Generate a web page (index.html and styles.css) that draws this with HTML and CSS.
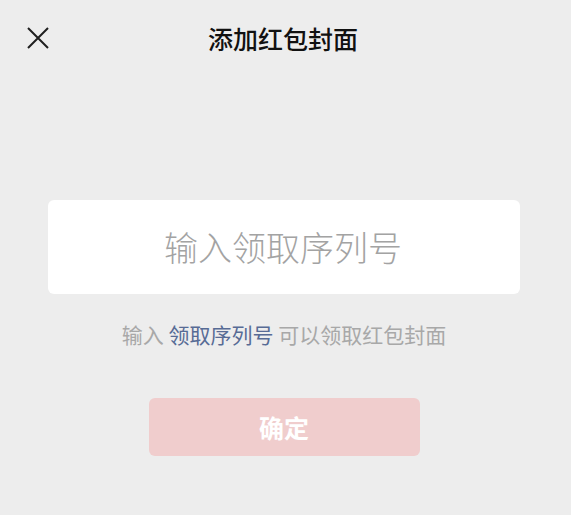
FILE: index.html
```
<!DOCTYPE html>
<html lang="zh">
<head>
<meta charset="utf-8">
<link rel="stylesheet" href="styles.css">
</head>
<body>
<div class="page">
  <header class="topbar">
    <button class="close" aria-label="关闭">
      <svg width="24" height="24" viewBox="0 0 24 24"><path d="M2 2 L22 22 M22 2 L2 22" stroke="#1f1f1f" stroke-width="2" fill="none"/></svg>
    </button>
    <h1 class="title">添加红包封面</h1>
    <span class="spacer"></span>
  </header>
  <main class="content">
    <div class="card">
      <span class="placeholder">输入领取序列号</span>
    </div>
    <p class="hint">输入 <span class="link">领取序列号</span> 可以领取红包封面</p>
    <button class="confirm">确定</button>
  </main>
</div>
</body>
</html>
```
FILE: styles.css
```
* { box-sizing: border-box; }
html, body { margin: 0; padding: 0; }
body {
  background: #ededed;
  font-family: "Noto Sans CJK SC", "Noto Sans", sans-serif;
  width: 571px;
  height: 515px;
  overflow: hidden;
}
.topbar {
  height: 76px;
  display: grid;
  grid-template-columns: 80px 1fr 80px;
  align-items: center;
}
.close {
  border: 0;
  background: none;
  padding: 0;
  margin-left: 26px;
  width: 24px;
  height: 24px;
  display: flex;
}
.title {
  margin: 0;
  padding-right: 5px;
  text-align: center;
  font-size: 25px;
  font-weight: 500;
  color: #111;
  line-height: 1;
}
.content {
  padding: 0 51px 0 48px;
  display: flex;
  flex-direction: column;
}
.card {
  margin-top: 124px;
  height: 94px;
  background: #fff;
  border-radius: 6px;
  display: flex;
  align-items: center;
  justify-content: center;
}
.placeholder {
  font-size: 34px;
  font-weight: 300;
  color: #a3a3a3;
  line-height: 1;
  margin-right: 2px;
}
.hint {
  margin: 26px 0 0;
  text-align: center;
  font-size: 21px;
  line-height: 28px;
  color: #a8a8a8;
}
.link { color: #576b95; }
.confirm {
  margin: 50px auto 0;
  width: 271px;
  height: 58px;
  border: 0;
  border-radius: 6px;
  background: #f0cdcd;
  color: #fff;
  font-family: inherit;
  font-size: 25px;
  font-weight: 700;
}
```
